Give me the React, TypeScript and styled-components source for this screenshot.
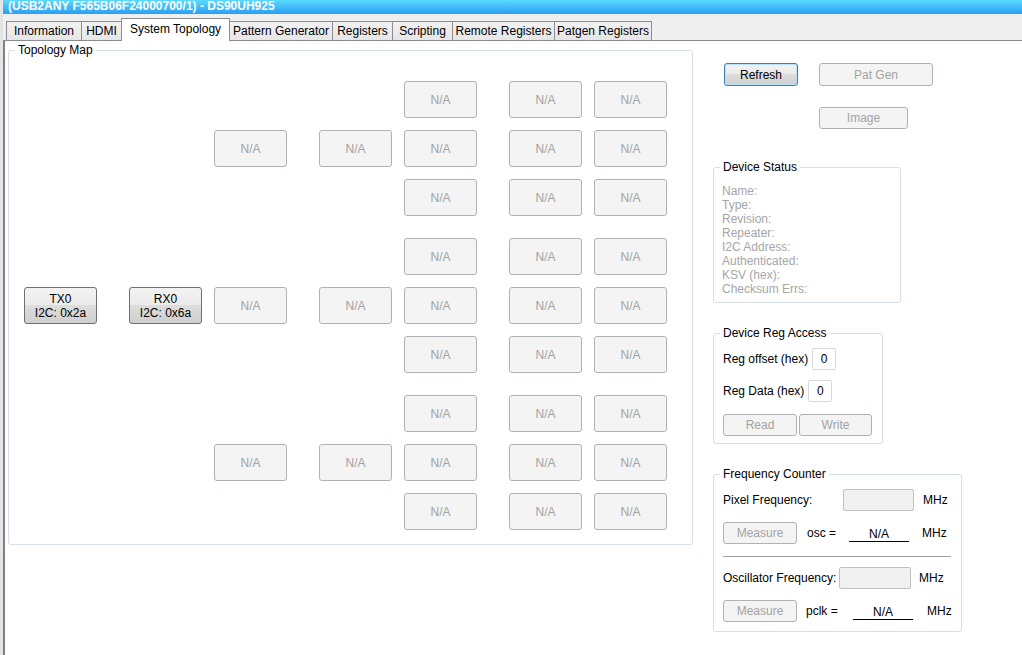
import React from 'react';
import styled, { createGlobalStyle, css } from 'styled-components';

const GlobalStyle = createGlobalStyle`
  html, body {
    margin: 0;
    padding: 0;
    overflow: hidden;
    background: #ffffff;
  }
  body {
    font-family: "Liberation Sans", Arial, sans-serif;
    font-size: 12px;
    color: #000;
  }
`;

const Window = styled.div`
  width: 1022px;
  height: 655px;
  display: flex;
  flex-direction: column;
  background: #e4e4e4;
  padding-left: 3px;
  box-sizing: border-box;
`;

const TitleBar = styled.div`
  height: 14px;
  flex: none;
  background: linear-gradient(#58dafc, #2c9ef4);
  color: #ffffff;
  font-weight: bold;
  font-size: 12px;
  line-height: 13px;
  padding-left: 5px;
  white-space: nowrap;
  overflow: hidden;
`;

const TabStrip = styled.div`
  height: 26px;
  flex: none;
  display: flex;
  align-items: flex-end;
  background: #efefef;
  border-bottom: 1px solid #8a8c94;
  padding-left: 3px;
`;

const Tab = styled.div<{ $active?: boolean; $w: number }>`
  width: ${p => p.$w}px;
  height: 19px;
  line-height: 19px;
  text-align: center;
  box-sizing: border-box;
  border: 1px solid #8d8d8d;
  border-bottom: none;
  margin-right: -1px;
  background: linear-gradient(#f2f2f2, #e6e6e6);
  font-size: 12px;
  white-space: nowrap;
  ${p =>
    p.$active &&
    css`
      height: 23px;
      line-height: 20px;
      margin-bottom: -1px;
      background: #ffffff;
      position: relative;
      z-index: 1;
      padding-bottom: 3px;
    `}
`;

const Body = styled.div`
  flex: 1;
  display: flex;
  background: #ffffff;
  border-left: 2px solid #80808a;
`;

const GroupBox = styled.fieldset<{ $w: number; $h: number }>`
  margin: 0;
  padding: 0;
  min-width: 0;
  box-sizing: border-box;
  width: ${p => p.$w}px;
  height: ${p => p.$h}px;
  border: 1px solid #d5dfe5;
  border-radius: 3px;
  flex: none;
`;

const Legend = styled.legend`
  margin-left: 6px;
  padding: 0 3px;
  font-size: 12px;
  line-height: 14px;
  color: #000;
`;

const MapBox = styled(GroupBox)`
  margin: 2px 0 0 3px;
`;

const MapGrid = styled.div`
  display: grid;
  grid-template-columns: 73px 32px 73px 12px 73px 32px 73px 12px 73px 32px 73px 12px 73px;
  grid-template-rows: 37px 12px 37px 12px 37px 22px 37px 12px 37px 12px 37px 22px 37px 12px 37px 12px 37px;
  padding: 24px 0 0 15px;
`;

const MapButton = styled.div<{ $col: number; $row: number; $live?: boolean }>`
  grid-column: ${p => p.$col * 2 + 1};
  grid-row: ${p => p.$row * 2 + 1};
  box-sizing: border-box;
  border-radius: 3px;
  display: flex;
  flex-direction: column;
  align-items: center;
  justify-content: center;
  font-size: 12px;
  line-height: 14px;
  border: 1px solid #adb2b5;
  background: #f4f4f4;
  color: #a3a3a3;
  ${p =>
    p.$live &&
    css`
      border-color: #707070;
      color: #000;
      background: linear-gradient(#f2f2f2 0%, #ebebeb 50%, #dddddd 50%, #cfcfcf 100%);
    `}
`;

const SidePanel = styled.div`
  display: flex;
  flex-direction: column;
  margin-left: 20px;
`;

const ButtonRow = styled.div<{ $top: number; $left: number }>`
  display: flex;
  margin-top: ${p => p.$top}px;
  padding-left: ${p => p.$left}px;
`;

const Button = styled.div<{ $w: number; $h?: number; $primary?: boolean; $gap?: number }>`
  width: ${p => p.$w}px;
  height: ${p => p.$h ?? 22}px;
  margin-left: ${p => p.$gap ?? 0}px;
  box-sizing: border-box;
  border-radius: 3px;
  display: flex;
  align-items: center;
  justify-content: center;
  font-size: 12px;
  flex: none;
  border: 1px solid #adb2b5;
  background: #f4f4f4;
  color: #a3a3a3;
  ${p =>
    p.$primary &&
    css`
      border-color: #3c7fb1;
      color: #000;
      background: linear-gradient(#f2f2f2 0%, #ebebeb 50%, #dddddd 50%, #cfcfcf 100%);
      box-shadow: inset 0 0 0 1px #b8e3fb;
    `}
`;

const StatusBox = styled(GroupBox)`
  margin-top: 31px;
`;

const StatusList = styled.div`
  display: flex;
  flex-direction: column;
  padding: 10px 0 0 8px;
  color: #a6a6a6;
  line-height: 14px;
`;

const RegBox = styled(GroupBox)`
  margin-top: 23px;
`;

const FreqBox = styled(GroupBox)`
  margin-top: 23px;
`;

const FieldRow = styled.div<{ $top: number }>`
  display: flex;
  align-items: center;
  height: 22px;
  margin-top: ${p => p.$top}px;
  padding-left: 9px;
  white-space: nowrap;
`;

const FieldLabel = styled.span<{ $w?: number; $gap?: number }>`
  flex: none;
  margin-left: ${p => p.$gap ?? 0}px;
  ${p => (p.$w ? `width: ${p.$w}px;` : 'margin-right: 4px;')}
`;

const Input = styled.div<{ $w: number; $off?: boolean }>`
  width: ${p => p.$w}px;
  height: 22px;
  box-sizing: border-box;
  border: 1px solid ${p => (p.$off ? '#c2c2c2' : '#d6d9dc')};
  border-radius: 2px;
  background: ${p => (p.$off ? '#f0f0f0' : '#ffffff')};
  display: flex;
  align-items: center;
  justify-content: center;
  flex: none;
`;

const Unit = styled.span<{ $gap: number }>`
  margin-left: ${p => p.$gap}px;
`;

const Readout = styled.span<{ $w: number }>`
  width: ${p => p.$w}px;
  flex: none;
  text-align: center;
  border-bottom: 1px solid #000;
  line-height: 13px;
  padding-top: 4px;
`;

const Divider = styled.div`
  height: 1px;
  background: #a0a0a0;
  margin: 12px 10px 0 9px;
`;

const tabs: [string, number][] = [
  ['Information', 76],
  ['HDMI', 41],
  ['System Topology', 109],
  ['Pattern Generator', 104],
  ['Registers', 61],
  ['Scripting', 61],
  ['Remote Registers', 103],
  ['Patgen Registers', 98],
];

const statusItems = [
  'Name:',
  'Type:',
  'Revision:',
  'Repeater:',
  'I2C Address:',
  'Authenticated:',
  'KSV (hex):',
  'Checksum Errs:',
];

type Cell = { col: number; row: number; lines: string[]; live?: boolean };

const buildCells = (): Cell[] => {
  const cells: Cell[] = [
    { col: 0, row: 4, lines: ['TX0', 'I2C: 0x2a'], live: true },
    { col: 1, row: 4, lines: ['RX0', 'I2C: 0x6a'], live: true },
  ];
  for (let col = 2; col < 7; col++) {
    for (let row = 0; row < 9; row++) {
      // columns 2 and 3 only hold the middle row of each group
      if (col < 4 && row % 3 !== 1) continue;
      cells.push({ col, row, lines: ['N/A'] });
    }
  }
  return cells;
};

const App = () => {
  const cells = buildCells();
  return (
    <>
      <GlobalStyle />
      <Window>
        <TitleBar>(USB2ANY F565B06F24000700/1) - DS90UH925</TitleBar>
        <TabStrip>
          {tabs.map(([t, w]) => (
            <Tab key={t} $w={w} $active={t === 'System Topology'}>
              {t}
            </Tab>
          ))}
        </TabStrip>
        <Body>
          <MapBox $w={685} $h={502}>
            <Legend>Topology Map</Legend>
            <MapGrid>
              {cells.map(c => (
                <MapButton key={`${c.col}-${c.row}`} $col={c.col} $row={c.row} $live={c.live}>
                  {c.lines.map(l => (
                    <span key={l}>{l}</span>
                  ))}
                </MapButton>
              ))}
            </MapGrid>
          </MapBox>

          <SidePanel>
            <ButtonRow $top={22} $left={11}>
              <Button $w={74} $h={23} $primary>
                Refresh
              </Button>
              <Button $w={114} $h={23} $gap={21}>
                Pat Gen
              </Button>
            </ButtonRow>
            <ButtonRow $top={21} $left={106}>
              <Button $w={89}>Image</Button>
            </ButtonRow>

            <StatusBox $w={188} $h={143}>
              <Legend>Device Status</Legend>
              <StatusList>
                {statusItems.map(s => (
                  <span key={s}>{s}</span>
                ))}
              </StatusList>
            </StatusBox>

            <RegBox $w={170} $h={118}>
              <Legend>Device Reg Access</Legend>
              <FieldRow $top={8}>
                <FieldLabel>Reg offset (hex)</FieldLabel>
                <Input $w={24}>0</Input>
              </FieldRow>
              <FieldRow $top={10}>
                <FieldLabel>Reg Data (hex)</FieldLabel>
                <Input $w={24}>0</Input>
              </FieldRow>
              <FieldRow $top={12}>
                <Button $w={74}>Read</Button>
                <Button $w={73} $gap={2}>
                  Write
                </Button>
              </FieldRow>
            </RegBox>

            <FreqBox $w={249} $h={165}>
              <Legend>Frequency Counter</Legend>
              <FieldRow $top={8}>
                <FieldLabel $w={120}>Pixel Frequency:</FieldLabel>
                <Input $w={71} $off />
                <Unit $gap={9}>MHz</Unit>
              </FieldRow>
              <FieldRow $top={11}>
                <Button $w={74}>Measure</Button>
                <FieldLabel $w={42} $gap={10}>
                  osc =
                </FieldLabel>
                <Readout $w={60}>N/A</Readout>
                <Unit $gap={13}>MHz</Unit>
              </FieldRow>
              <Divider />
              <FieldRow $top={10}>
                <FieldLabel $w={116}>Oscillator Frequency:</FieldLabel>
                <Input $w={72} $off />
                <Unit $gap={8}>MHz</Unit>
              </FieldRow>
              <FieldRow $top={11}>
                <Button $w={74}>Measure</Button>
                <FieldLabel $w={47} $gap={9}>
                  pclk =
                </FieldLabel>
                <Readout $w={60}>N/A</Readout>
                <Unit $gap={14}>MHz</Unit>
              </FieldRow>
            </FreqBox>
          </SidePanel>
        </Body>
      </Window>
    </>
  );
};

export default App;
